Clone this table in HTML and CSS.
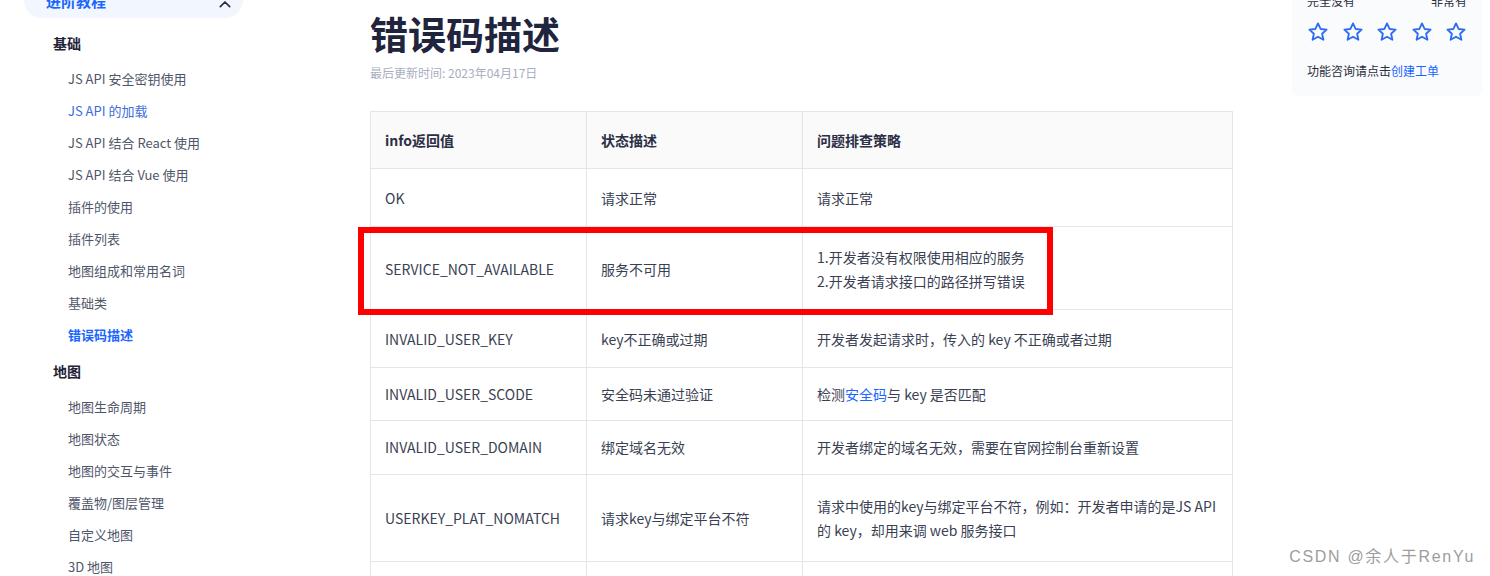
FILE: index.html
```html
<!DOCTYPE html>
<html lang="zh-CN">
<head>
<meta charset="utf-8">
<title>错误码描述</title>
<link rel="stylesheet" href="styles.css">
</head>
<body>
<div class="page">
  <nav class="sidebar">
    <div class="pill">
      <span class="pill-text">进阶教程</span>
      <svg class="chev" width="16" height="16" viewBox="0 0 24 24"><path d="M5 16l7-7 7 7" fill="none" stroke="#2b2f3d" stroke-width="2.6" stroke-linecap="round" stroke-linejoin="round"/></svg>
    </div>
    <div class="group">基础</div>
    <a class="item">JS API 安全密钥使用</a>
    <a class="item visited">JS API 的加载</a>
    <a class="item">JS API 结合 React 使用</a>
    <a class="item">JS API 结合 Vue 使用</a>
    <a class="item">插件的使用</a>
    <a class="item">插件列表</a>
    <a class="item">地图组成和常用名词</a>
    <a class="item">基础类</a>
    <a class="item active">错误码描述</a>
    <div class="group">地图</div>
    <a class="item">地图生命周期</a>
    <a class="item">地图状态</a>
    <a class="item">地图的交互与事件</a>
    <a class="item">覆盖物/图层管理</a>
    <a class="item">自定义地图</a>
    <a class="item">3D 地图</a>
  </nav>

  <main class="content">
    <h1 class="title">错误码描述</h1>
    <div class="updated">最后更新时间: 2023年04月17日</div>
    <div class="table-wrap">
      <table class="codes">
        <colgroup><col class="c1"><col class="c2"><col class="c3"></colgroup>
        <thead>
          <tr><th>info返回值</th><th>状态描述</th><th>问题排查策略</th></tr>
        </thead>
        <tbody>
          <tr class="r-ok"><td>OK</td><td>请求正常</td><td>请求正常</td></tr>
          <tr class="tall r-svc"><td>SERVICE_NOT_AVAILABLE</td><td>服务不可用</td><td><p>1.开发者没有权限使用相应的服务</p><p>2.开发者请求接口的路径拼写错误</p></td></tr>
          <tr class="r-key"><td>INVALID_USER_KEY</td><td>key不正确或过期</td><td>开发者发起请求时，传入的 key 不正确或者过期</td></tr>
          <tr class="r-scode"><td>INVALID_USER_SCODE</td><td>安全码未通过验证</td><td>检测<a class="link">安全码</a>与 key 是否匹配</td></tr>
          <tr class="r-domain"><td>INVALID_USER_DOMAIN</td><td>绑定域名无效</td><td>开发者绑定的域名无效，需要在官网控制台重新设置</td></tr>
          <tr class="tall r-plat"><td>USERKEY_PLAT_NOMATCH</td><td>请求key与绑定平台不符</td><td><p>请求中使用的key与绑定平台不符，例如：开发者申请的是JS API</p><p>的 key，却用来调 web 服务接口</p></td></tr>
          <tr><td>&nbsp;</td><td>&nbsp;</td><td>&nbsp;</td></tr>
        </tbody>
      </table>
      <div class="highlight"></div>
    </div>
  </main>

  <aside class="feedback">
    <div class="scale"><span>完全没有</span><span>非常有</span></div>
    <div class="stars">
      <svg class="star" viewBox="0 0 24 24"><polygon points="12,2.6 14.8,8.7 21.4,9.4 16.5,13.9 17.9,20.5 12,17.1 6.1,20.5 7.5,13.9 2.6,9.4 9.2,8.7"/></svg>
      <svg class="star" viewBox="0 0 24 24"><polygon points="12,2.6 14.8,8.7 21.4,9.4 16.5,13.9 17.9,20.5 12,17.1 6.1,20.5 7.5,13.9 2.6,9.4 9.2,8.7"/></svg>
      <svg class="star" viewBox="0 0 24 24"><polygon points="12,2.6 14.8,8.7 21.4,9.4 16.5,13.9 17.9,20.5 12,17.1 6.1,20.5 7.5,13.9 2.6,9.4 9.2,8.7"/></svg>
      <svg class="star" viewBox="0 0 24 24"><polygon points="12,2.6 14.8,8.7 21.4,9.4 16.5,13.9 17.9,20.5 12,17.1 6.1,20.5 7.5,13.9 2.6,9.4 9.2,8.7"/></svg>
      <svg class="star" viewBox="0 0 24 24"><polygon points="12,2.6 14.8,8.7 21.4,9.4 16.5,13.9 17.9,20.5 12,17.1 6.1,20.5 7.5,13.9 2.6,9.4 9.2,8.7"/></svg>
    </div>
    <div class="consult">功能咨询请点击<a class="link">创建工单</a></div>
  </aside>
</div>
<div class="watermark">CSDN @余人于RenYu</div>
</body>
</html>
```

FILE: styles.css
```css
* { box-sizing: border-box; }
html, body { margin: 0; padding: 0; background: #fff; overflow: hidden; }
body {
  font-family: "Noto Sans CJK SC", "Noto Sans", sans-serif;
  color: #3a3f51;
  width: 1490px;
  height: 576px;
  position: relative;
}
.page { display: flex; align-items: flex-start; }

/* sidebar */
.sidebar {
  width: 260px;
  padding-left: 24px;
  display: flex;
  flex-direction: column;
  flex: none;
}
.pill {
  width: 219px;
  height: 36px;
  margin-top: -18px;
  margin-bottom: 5px;
  background: #f2f6fe;
  border-radius: 18px;
  display: flex;
  align-items: center;
  justify-content: space-between;
  padding: 0 10px 0 22px;
}
.pill-text { color: #1a66ff; font-weight: 700; font-size: 15px; }
.chev { display: block; margin-top: 8px; }
.group {
  height: 32px;
  line-height: 32px;
  margin: 4px 0;
  padding-left: 29px;
  font-size: 14px;
  font-weight: 700;
  color: #1f2337;
}
.item {
  display: block;
  height: 32px;
  line-height: 32px;
  padding-left: 44px;
  font-size: 13px;
  color: #50566a;
  white-space: nowrap;
}
.item.visited { color: #3d6cdc; }
.item.active { color: #1a66ff; font-weight: 700; }

/* main */
.content {
  width: 863px;
  margin-left: 110px;
  flex: none;
}
.title {
  margin: 9px 0 0;
  font-size: 38px;
  line-height: 48px;
  font-weight: 700;
  color: #20243d;
}
.updated {
  margin-top: 7px;
  font-size: 12px;
  line-height: 18px;
  color: #a8aec0;
}
.table-wrap { position: relative; margin-top: 29px; }
.codes {
  width: 863px;
  border-collapse: collapse;
  table-layout: fixed;
  font-size: 14px;
  color: #3a3f53;
}
.c1, .c2 { width: 216px; }
.codes th, .codes td {
  border: 1px solid #e4e5e8;
  text-align: left;
  vertical-align: middle;
  padding: 16px 14px;
  line-height: 22px;
}
.codes th {
  background: #fafafa;
  font-weight: 700;
  color: #2b2f45;
  padding: 17px 14px;
}
.codes tr.r-ok td { padding: 18px 14px 17px; }
.codes tr.r-svc td { padding: 18px 14px 16px; }
.codes tr.r-key td { padding: 18px 14px 17px; }
.codes tr.r-scode td { padding: 15px 14px 15px; }
.codes tr.r-domain td { padding: 15px 14px 16px; }
.codes tr.r-plat td { padding: 19px 14px 19px; }
.codes tr.tall p { margin: 0; line-height: 24px; }
.link { color: #1a66ff; }
.highlight {
  position: absolute;
  left: -12px;
  top: 116px;
  width: 695px;
  height: 88px;
  border: 6px solid #ff0000;
  pointer-events: none;
}

/* feedback */
.feedback {
  margin-left: 59px;
  margin-top: -8px;
  width: 190px;
  background: #fafbfc;
  border-radius: 6px;
  padding: 0 15px 16px 15px;
  flex: none;
}
.scale {
  display: flex;
  justify-content: space-between;
  font-size: 12px;
  line-height: 18px;
  color: #2b2f3d;
}
.stars {
  display: flex;
  gap: 12.5px;
  margin-top: 11px;
}
.star {
  width: 22px;
  height: 22px;
  fill: none;
  stroke: #2d6cf2;
  stroke-width: 2;
  stroke-linejoin: round;
}
.consult {
  margin-top: 19px;
  font-size: 12px;
  line-height: 18px;
  color: #2b2f3d;
}

.watermark {
  position: absolute;
  right: 15px;
  bottom: 9px;
  font-family: "Liberation Sans", "Noto Sans CJK SC", sans-serif;
  font-size: 16px;
  letter-spacing: 1.7px;
  color: #9d9d9d;
  text-shadow: 0 0 2px #fff;
}
```
